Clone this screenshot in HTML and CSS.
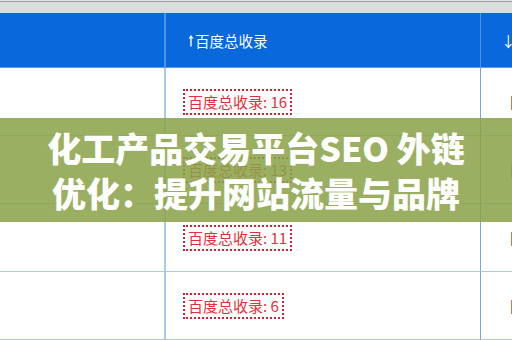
FILE: index.html
```html
<!DOCTYPE html>
<html lang="zh-CN">
<head>
    <meta charset="UTF-8">
    <meta name="viewport" content="width=device-width, initial-scale=1.0">
    <title>化工产品交易平台SEO 外链优化</title>
    <link rel="stylesheet" href="styles.css">
</head>
<body>
    <div class="page">
        <div class="top-strip"></div>
        <div class="table">
            <div class="head cell col-a"></div>
            <div class="head cell col-b"><svg class="arrow" width="6" height="13" viewBox="0 0 6 13"><path d="M3 1 L0.5 4.5 H2.3 V12.5 H3.7 V4.5 H5.5 Z" fill="#fff"/></svg>百度总收录</div>
            <div class="head cell col-c">↓百度</div>

            <div class="cell col-a"></div>
            <div class="cell col-b"><span class="badge">百度总收录: 16</span></div>
            <div class="cell col-c">目</div>

            <div class="cell col-a"><span class="badge badge-cut">百度总收录: 9</span></div>
            <div class="cell col-b"><span class="badge">百度总收录: 13</span></div>
            <div class="cell col-c">目</div>

            <div class="cell col-a"></div>
            <div class="cell col-b"><span class="badge">百度总收录: 11</span></div>
            <div class="cell col-c">目</div>

            <div class="cell col-a"></div>
            <div class="cell col-b"><span class="badge">百度总收录: 6</span></div>
            <div class="cell col-c">目</div>
        </div>

        <!-- title band laid over the table -->
        <div class="title-band">
            <h1 class="title">化工产品交易平台SEO 外链<br>优化：提升网站流量与品牌</h1>
        </div>
    </div>
</body>
</html>
```

FILE: styles.css
```css
body, html {
    margin: 0;
    padding: 0;
    background-color: #fff;
    font-family: "Noto Sans CJK SC", "Noto Sans", sans-serif;
}
.page {
    position: relative;
    width: 512px;
    height: 340px;
    overflow: hidden;
}
.top-strip {
    height: 13px;
    background: linear-gradient(#e2e2e2 0, #e2e2e2 1px, #7ea6e0 1px, #7ea6e0 2px, #dcdcdc 2px, #dcdcdc 12px, #c9d9ee 12px);
}
.table {
    display: grid;
    grid-template-columns: 166px 315px 80px;
    grid-template-rows: 55px repeat(4, 68px);
}
.cell {
    display: flex;
    align-items: center;
    box-sizing: border-box;
    border-bottom: 1px solid #a9cbee;
    overflow: hidden;
    white-space: nowrap;
}
.col-a {
    border-right: 2px solid #a8cbea;
}
.col-b {
    border-right: 1px solid #7aa6e2;
    padding-left: 17px;
}
.col-c {
    padding-left: 28px;
    color: #444;
    font-size: 15px;
}
.head {
    background-color: #0868dc;
    color: #fff;
    font-size: 14.5px;
    border-bottom: 1px solid #5c9ae6;
}
.head.col-a {
    border-right-color: #4d93e6;
}
.head.col-b {
    border-right-color: #4d93e6;
    padding-left: 22px;
}
.head.col-c {
    padding-left: 20px;
    color: #fff;
}
.arrow {
    margin-right: 1px;
}
.badge {
    display: inline-block;
    height: 26px;
    line-height: 22px;
    box-sizing: border-box;
    border: 2px dotted #cc2236;
    padding: 0 3px 0 3px;
    color: #e0303c;
    font-size: 15px;
    white-space: nowrap;
}
.badge-cut {
    margin-left: -106px;
    color: #b0503a;
    border-color: #b0503a;
}
.title-band {
    position: absolute;
    top: 118px;
    left: 0;
    right: 0;
    height: 104px;
    background-color: rgba(138, 162, 72, 0.86);
    display: flex;
    align-items: center;
    justify-content: center;
}
.title {
    margin: 0;
    color: #fff;
    font-size: 34px;
    font-weight: 900;
    line-height: 45px;
    text-align: center;
}
```
